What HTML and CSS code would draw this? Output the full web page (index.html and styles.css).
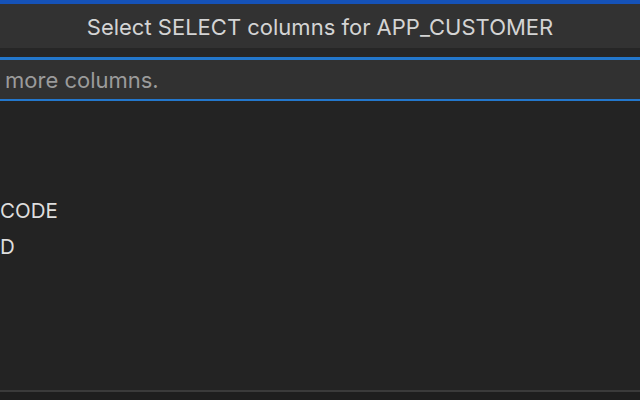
FILE: index.html
```html
<!DOCTYPE html>
<html>
<head>
<meta charset="utf-8">
<link rel="stylesheet" href="styles.css">
</head>
<body>
<div class="app">
  <div class="accent"></div>
  <div class="title">Select SELECT columns for APP_CUSTOMER</div>
  <div class="gap"></div>
  <div class="input"><span class="placeholder">more columns.</span></div>
  <div class="list">
    <div class="row"></div>
    <div class="row"></div>
    <div class="row">CODE</div>
    <div class="row">D</div>
  </div>
  <div class="footer"></div>
</div>
</body>
</html>
```
FILE: styles.css
```css
html, body {
  margin: 0;
  padding: 0;
  background: #232323;
}
.app {
  width: 640px;
  height: 400px;
  display: flex;
  flex-direction: column;
  font-family: Inter, "Helvetica Neue", "Liberation Sans", sans-serif;
  overflow: hidden;
}
.accent {
  height: 4px;
  background: #1552b8;
}
.title {
  height: 42px;
  padding-top: 2px;
  background: #323232;
  color: #d4d4d4;
  font-size: 22px;
  display: flex;
  align-items: center;
  justify-content: center;
}
.gap {
  height: 9px;
  background: #262626;
}
.input {
  height: 39px;
  background: #313131;
  border-top: 3px solid #2377cc;
  border-bottom: 2px solid #2377cc;
  display: flex;
  align-items: center;
  padding-left: 5px;
}
.placeholder {
  color: #9b9b9b;
  font-size: 22px;
  padding-top: 1px;
}
.list {
  flex: 1;
  background: #232323;
  padding-top: 20px;
}
.row {
  height: 36px;
  line-height: 36px;
  color: #dedede;
  font-size: 20.5px;
  padding-left: 0;
}
.footer {
  height: 8px;
  border-top: 2px solid #3a3a3a;
  background: #1e1e1e;
}
```
